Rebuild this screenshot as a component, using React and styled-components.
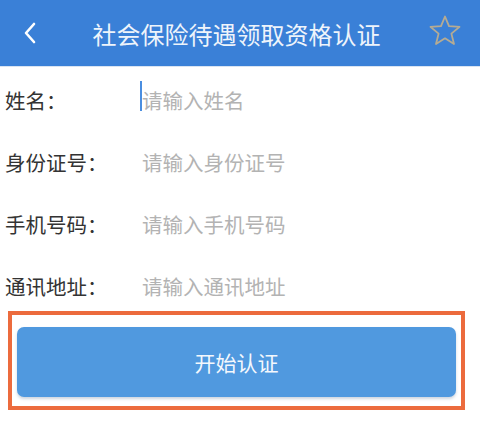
import React from "react";
import styled, { createGlobalStyle } from "styled-components";

const Global = createGlobalStyle`
  html, body { margin: 0; padding: 0; background: #fff; }
  body { font-family: "Noto Sans CJK SC", "Noto Sans", sans-serif; }
  * { box-sizing: border-box; }
`;

const Page = styled.div`
  width: 480px;
  height: 423px;
  background: #fff;
  overflow: hidden;
`;

const Header = styled.header`
  height: 67px;
  background: #3a80d7;
  display: flex;
  align-items: center;
  padding: 0 16px 0 22px;
  border-bottom: 1px solid #d9e4f2;
`;

const Back = styled.div`
  width: 20px;
  height: 28px;
  display: flex;
  align-items: center;
  margin-top: -1px;
`;

const Title = styled.h1`
  flex: 1;
  margin: 0;
  text-align: center;
  color: #eef4fb;
  font-size: 24px;
  font-weight: 400;
  padding-left: 5px;
`;

const Star = styled.div`
  width: 38px;
  height: 38px;
  display: flex;
  align-items: center;
  justify-content: center;
  margin-top: -4px;
`;

const Form = styled.div`
  display: flex;
  flex-direction: column;
  gap: 12px;
  padding-top: 8px;
`;

const Row = styled.div`
  height: 50px;
  display: flex;
  align-items: center;
  padding-left: 5px;
`;

const Label = styled.div`
  width: 137px;
  font-size: 20.5px;
  color: #333;
`;

const Field = styled.div`
  position: relative;
  font-size: 20.5px;
  color: #b3b3b3;
  display: flex;
  align-items: center;
`;

const Caret = styled.span`
  position: absolute;
  left: -2px;
  top: -4px;
  width: 2px;
  height: 30px;
  background: #4a8ee0;
`;

const Highlight = styled.div`
  margin: 0 15px 0 8px;
  height: 99px;
  border: 4px solid #ec6b3d;
  padding: 12px 5px 9px 5px;
`;

const Button = styled.button`
  width: 100%;
  height: 70px;
  border: none;
  border-radius: 7px;
  background: #5099df;
  color: #f4f8fd;
  font-family: inherit;
  font-size: 21px;
  box-shadow: 0 2px 3px rgba(60, 90, 130, 0.25);
`;

const fields = [
  { label: "姓名：", ph: "请输入姓名", caret: true },
  { label: "身份证号：", ph: "请输入身份证号" },
  { label: "手机号码：", ph: "请输入手机号码" },
  { label: "通讯地址：", ph: "请输入通讯地址" },
];

export default function App() {
  return (
    <Page>
      <Global />
      <Header>
        <Back>
          <svg width="16" height="24" viewBox="0 0 16 24">
            <path d="M12 3 L4 12 L12 21" fill="none" stroke="#fff" strokeWidth="2.6" strokeLinecap="round" strokeLinejoin="round" />
          </svg>
        </Back>
        <Title>社会保险待遇领取资格认证</Title>
        <Star>
          <svg width="36" height="36" viewBox="0 0 36 36">
            <path
              d="M18 3.5 L22 13.2 L32.5 13.9 L24.4 20.6 L27 31 L18 25.3 L9 31 L11.6 20.6 L3.5 13.9 L14 13.2 Z"
              fill="none"
              stroke="#b5ab93"
              strokeWidth="1.8"
              strokeLinejoin="round"
            />
          </svg>
        </Star>
      </Header>
      <Form>
        {fields.map((f) => (
          <Row key={f.label}>
            <Label>{f.label}</Label>
            <Field>
              {f.caret && <Caret />}
              {f.ph}
            </Field>
          </Row>
        ))}
      </Form>
      <Highlight>
        <Button>开始认证</Button>
      </Highlight>
    </Page>
  );
}
